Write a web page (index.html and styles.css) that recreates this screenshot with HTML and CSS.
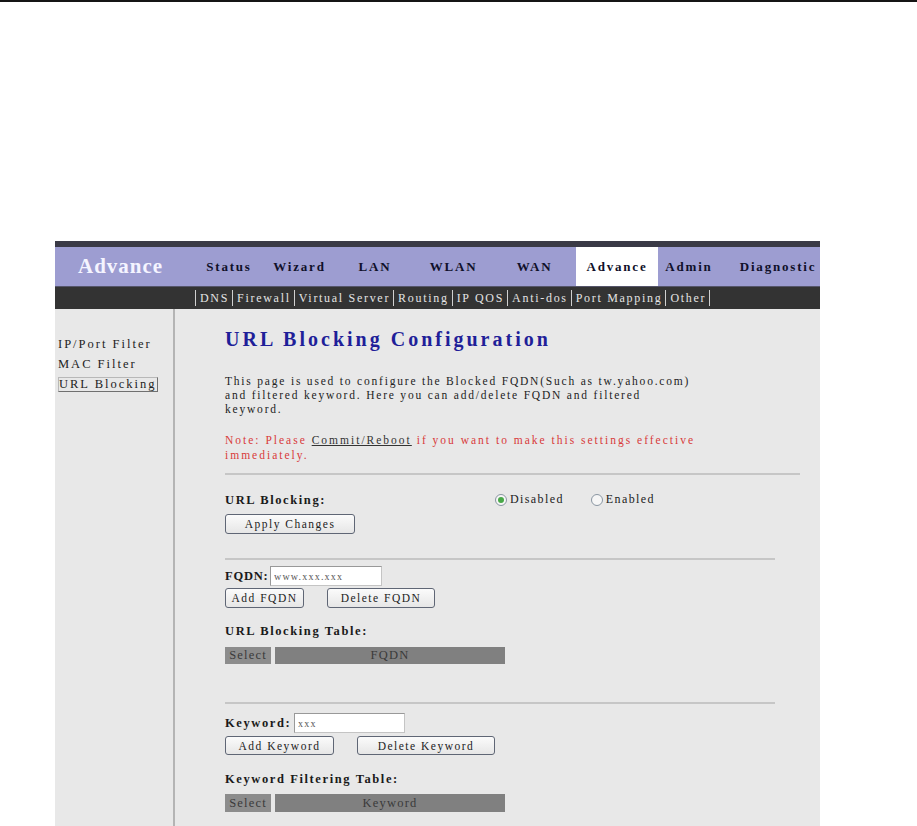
FILE: index.html
```html
<!DOCTYPE html>
<html lang="en">
<head>
    <meta charset="UTF-8">
    <title>URL Blocking Configuration</title>
    <link rel="stylesheet" href="styles.css">
</head>
<body>

    <div class="page-rule"></div>

    <!-- Captura de la interfaz del router -->
    <div class="shot">
        <div class="topbar">
            <div class="logo">Advance</div>
            <ul class="nav">
                <li>Status</li>
                <li>Wizard</li>
                <li>LAN</li>
                <li>WLAN</li>
                <li>WAN</li>
                <li class="active">Advance</li>
                <li>Admin</li>
                <li>Diagnostic</li>
            </ul>
        </div>

        <div class="subnav">
            <span>DNS</span><span>Firewall</span><span>Virtual Server</span><span>Routing</span><span>IP QOS</span><span>Anti-dos</span><span>Port Mapping</span><span>Other</span>
        </div>

        <div class="frame">
            <!-- Menu lateral -->
            <div class="side">
                <div class="side-item">IP/Port Filter</div>
                <div class="side-item">MAC Filter</div>
                <div class="side-item"><span class="current">URL Blocking</span></div>
            </div>

            <!-- Contenido -->
            <div class="main">
                <h1>URL Blocking Configuration</h1>
                <p class="desc">This page is used to configure the Blocked FQDN(Such as tw.yahoo.com)<br>and filtered keyword. Here you can add/delete FQDN and filtered<br>keyword.</p>
                <p class="note">Note: Please <span class="link">Commit/Reboot</span> if you want to make this settings effective<br>immediately.</p>

                <div class="rule wide"></div>

                <div class="section first">
                    <div class="row">
                        <span class="label toggle-label">URL Blocking:</span>
                        <span class="radio checked"></span><span class="radio-text">Disabled</span>
                        <span class="radio second"></span><span class="radio-text">Enabled</span>
                    </div>
                    <button class="btn apply">Apply Changes</button>
                </div>

                <div class="rule"></div>

                <div class="section">
                    <div class="row">
                        <span class="label fqdn-label">FQDN:</span>
                        <input class="field fqdn-field" type="text" value="www.xxx.xxx">
                    </div>
                    <div class="buttons">
                        <button class="btn add-fqdn">Add FQDN</button>
                        <button class="btn del-fqdn">Delete FQDN</button>
                    </div>
                    <div class="label table-title">URL Blocking Table:</div>
                    <table class="list">
                        <tr>
                            <td class="sel">Select</td>
                            <td class="name">FQDN</td>
                        </tr>
                    </table>
                </div>

                <div class="rule third"></div>

                <div class="section keyword">
                    <div class="row">
                        <span class="label kw-label">Keyword:</span>
                        <input class="field kw-field" type="text" value="xxx">
                    </div>
                    <div class="buttons">
                        <button class="btn add-kw">Add Keyword</button>
                        <button class="btn del-kw">Delete Keyword</button>
                    </div>
                    <div class="label table-title kw-title">Keyword Filtering Table:</div>
                    <table class="list kw-list">
                        <tr>
                            <td class="sel">Select</td>
                            <td class="name">Keyword</td>
                        </tr>
                    </table>
                </div>
            </div>
        </div>
    </div>

</body>
</html>
```

FILE: styles.css
```css
body {
    margin: 0;
    background-color: #fff;
    font-family: "Liberation Serif", "DejaVu Serif", serif;
    color: #222;
}

.page-rule {
    height: 2px;
    background-color: #151515;
}

.shot {
    width: 765px;
    height: 580px;
    margin: 239px 0 0 55px;
    overflow: hidden;
    border-top: 6px solid #3a3a46;
    background-color: #e8e8e8;
}

/* Barra superior */
.topbar {
    display: flex;
    height: 39px;
    background-color: #9d9dd1;
}

.logo {
    width: 117px;
    padding-left: 23px;
    flex-shrink: 0;
    line-height: 39px;
    font-size: 21px;
    font-weight: bold;
    letter-spacing: 1px;
    color: #f4f4ff;
    white-space: nowrap;
}

.nav {
    display: flex;
    margin: 0;
    padding: 0;
    list-style: none;
    flex-shrink: 0;
}

.nav li {
    line-height: 39px;
    text-align: center;
    font-size: 13px;
    font-weight: bold;
    letter-spacing: 1.8px;
    color: #10102a;
    flex-shrink: 0;
}

.nav li:nth-child(1) { width: 68px; }
.nav li:nth-child(2) { width: 73px; }
.nav li:nth-child(3) { width: 78px; }
.nav li:nth-child(4) { width: 79px; }
.nav li:nth-child(5) { width: 83px; }
.nav li:nth-child(6) { width: 82px; }
.nav li:nth-child(7) { width: 62px; }
.nav li:nth-child(8) { width: 116px; }

.nav li.active {
    background-color: #fff;
}

.subnav {
    display: flex;
    height: 23px;
    padding-left: 140px;
    line-height: 22px;
    font-size: 12px;
    letter-spacing: 1.7px;
    color: #e4e4e4;
    background-color: #333;
    white-space: nowrap;
    border-top: 1px solid #55556a;
    box-sizing: border-box;
}

.subnav span {
    padding: 0 3px 0 4px;
    border-left: 1px solid #d0d0d0;
    line-height: 16px;
    margin-top: 3px;
    height: 16px;
}

.subnav span:last-child {
    border-right: 1px solid #d0d0d0;
}

/* Cuerpo */
.frame {
    display: flex;
    height: 520px;
}

.side {
    width: 115px;
    padding: 25px 0 0 3px;
    border-right: 2px solid #b4b4b4;
    flex-shrink: 0;
}

.side-item {
    line-height: 20px;
    font-size: 12.5px;
    letter-spacing: 2px;
    color: #222;
    white-space: nowrap;
}

.side-item .current {
    display: inline-block;
    line-height: 13px;
    border: 1px solid #b8b8b8;
    border-right-color: #707070;
    border-bottom-color: #707070;
}

.main {
    flex: 1;
    padding: 17px 20px 0 50px;
}

h1 {
    margin: 0;
    line-height: 26px;
    font-size: 20px;
    font-weight: bold;
    letter-spacing: 3px;
    color: #1f1f99;
    white-space: nowrap;
}

.desc {
    margin: 22px 0 0;
    line-height: 14px;
    font-size: 11.5px;
    letter-spacing: 1.8px;
    color: #222;
    white-space: nowrap;
}

.note {
    margin: 17px 0 0;
    line-height: 15px;
    font-size: 11.5px;
    letter-spacing: 2px;
    color: #d83a3a;
    white-space: nowrap;
}

.note .link {
    color: #333;
    text-decoration: underline;
}

.rule {
    width: 550px;
    height: 2px;
    margin-top: 24px;
    background-color: #c6c6c6;
}

.rule.wide {
    width: auto;
    margin-top: 10px;
}

.rule.third {
    margin-top: 34px;
}

.section {
    padding-top: 6px;
}

.section.first {
    padding-top: 17px;
}

.section.keyword {
    padding-top: 9px;
}

.row {
    display: flex;
    align-items: center;
}

.label {
    font-size: 12.5px;
    font-weight: bold;
    letter-spacing: 1.6px;
    line-height: 14px;
    color: #1a1a1a;
    white-space: nowrap;
}

.toggle-label {
    width: 270px;
}

.radio {
    width: 10px;
    height: 10px;
    border: 1px solid #8a96a2;
    border-radius: 50%;
    background-color: #f6f6f6;
    position: relative;
}

.radio.checked::after {
    content: "";
    position: absolute;
    left: 2px;
    top: 2px;
    width: 6px;
    height: 6px;
    border-radius: 50%;
    background-color: #48a848;
}

.radio.second {
    margin-left: 27px;
}

.radio-text {
    margin-left: 3px;
    font-size: 12px;
    letter-spacing: 1.4px;
    color: #222;
}

.btn {
    height: 20px;
    padding: 0;
    font-family: "Liberation Serif", "DejaVu Serif", serif;
    font-size: 11.5px;
    letter-spacing: 1.5px;
    color: #222;
    background: linear-gradient(#fbfbfb, #e6e6e6);
    border: 1px solid #5f6675;
    border-radius: 3px;
}

.btn.apply {
    width: 130px;
    margin-top: 7px;
}

.fqdn-label {
    width: 45px;
    letter-spacing: 0.8px;
}

.kw-label {
    width: 69px;
}

.field {
    height: 20px;
    padding: 0 3px;
    box-sizing: border-box;
    font-family: "Liberation Serif", "DejaVu Serif", serif;
    font-size: 10px;
    letter-spacing: 1.2px;
    color: #555;
    background-color: #fff;
    border: 1px solid #c4c4c4;
    border-top-color: #999;
    border-left-color: #999;
}

.fqdn-field {
    width: 112px;
}

.kw-field {
    width: 111px;
}

.buttons {
    display: flex;
    gap: 23px;
    margin-top: 2px;
}

.add-fqdn { width: 79px; }
.del-fqdn { width: 108px; }
.add-kw { width: 109px; }
.del-kw { width: 138px; }

.section.keyword .buttons {
    margin-top: 3px;
}

.section.keyword .buttons .btn {
    height: 19px;
}

.table-title {
    margin-top: 16px;
}

.kw-title {
    margin-top: 17px;
}

.list {
    margin-top: 5px;
    border-spacing: 4px;
    margin-left: -4px;
}

.kw-list {
    margin-top: 4px;
}

.list td {
    height: 17px;
    padding: 0;
    font-size: 12.5px;
    letter-spacing: 1.2px;
    color: #3a3a3a;
    background-color: #808080;
    text-align: center;
}

.list td.sel {
    width: 46px;
    background-color: #8c8c8c;
}

.list td.name {
    width: 230px;
}

.kw-list td {
    height: 18px;
}
```
